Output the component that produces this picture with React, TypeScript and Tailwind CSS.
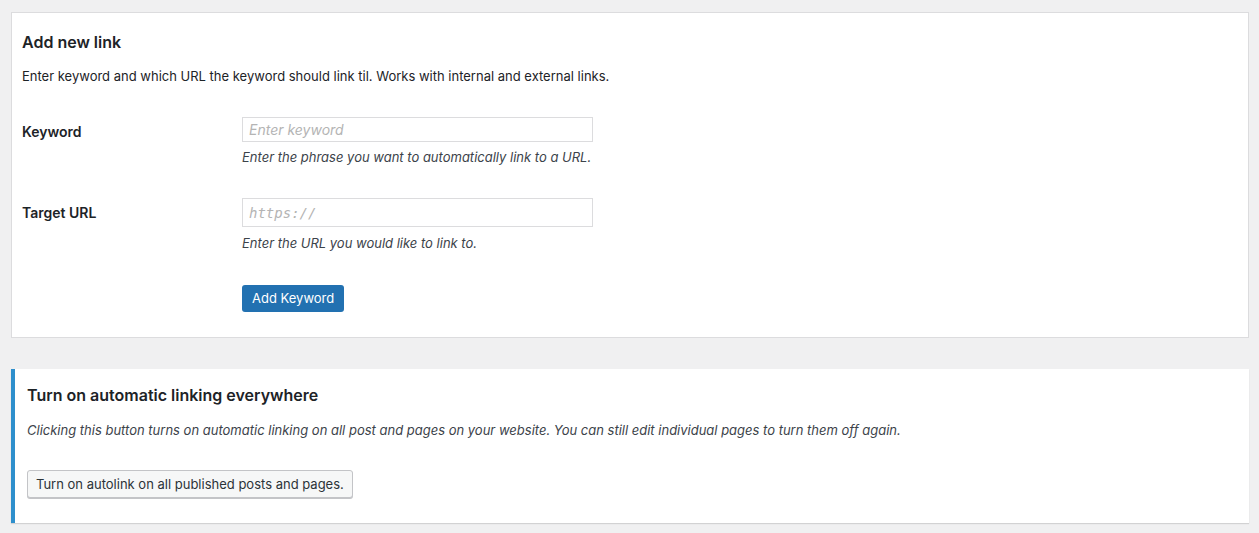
import React from "react";

const font = { fontFamily: "Inter, 'Noto Sans', sans-serif" };

// Rad i formulärtabellen
function FieldRow({
  label,
  placeholder,
  help,
  mono,
}: {
  label: string;
  placeholder: string;
  help: string;
  mono?: boolean;
}) {
  return (
    <div className="flex">
      <div className="w-[220px] shrink-0 pt-[4px] text-[14px] font-semibold text-[#1d2327]">
        {label}
      </div>
      <div>
        <input
          type="text"
          placeholder={placeholder}
          className={
            "block w-[351px] border border-[#dcdcde] bg-white px-[6px] text-[14px] text-[#2c3338] outline-none placeholder:text-[#b4b4b4] placeholder:italic " +
            (mono ? "h-[29px] font-['DejaVu_Sans_Mono',monospace] text-[13px]" : "h-[25px]")
          }
        />
        <p className={(mono ? "mt-[7px]" : "mt-[6px]") + " text-[13px] italic text-[#3c434a]"}>{help}</p>
      </div>
    </div>
  );
}

export default function App() {
  return (
    <div className="min-h-[533px] bg-[#f0f0f1] pl-[11px] pr-[10px] pt-[12px] pb-[10px]" style={font}>
      {/* Lägg till ny länk */}
      <div className="border border-[#dcdcde] bg-white px-[10px] pt-[17px] pb-[25px]">
        <h2 className="text-[16px] font-semibold text-[#1d2327]">Add new link</h2>
        <p className="mt-[13px] text-[13px] text-[#1d2327]">
          Enter keyword and which URL the keyword should link til. Works with internal and external links.
        </p>
        <div className="mt-[30px] flex flex-col gap-[31px]">
          <FieldRow
            label="Keyword"
            placeholder="Enter keyword"
            help="Enter the phrase you want to automatically link to a URL."
          />
          <FieldRow
            label="Target URL"
            placeholder="https://"
            help="Enter the URL you would like to link to."
            mono
          />
        </div>
        <div className="mt-[31px] pl-[220px]">
          <button className="h-[27px] rounded-[3px] bg-[#2271b1] px-[10px] text-[13px] text-white">
            Add Keyword
          </button>
        </div>
      </div>

      {/* Automatisk länkning */}
      <div className="mt-[31px] border-l-[4px] border-[#2e8fcc] bg-white pl-[12px] pt-[14px] pb-[25px] shadow-[0_1px_1px_rgba(0,0,0,0.12)]">
        <h2 className="text-[16px] font-semibold text-[#1d2327]">Turn on automatic linking everywhere</h2>
        <p className="mt-[14px] text-[13px] italic text-[#3c434a]">
          Clicking this button turns on automatic linking on all post and pages on your website. You can still edit
          individual pages to turn them off again.
        </p>
        <button className="mt-[30px] h-[28px] rounded-[3px] border border-[#c3c4c7] bg-[#f6f7f7] px-[8px] text-[13px] text-[#2c3338] shadow-[0_1px_0_#c3c4c7]">
          Turn on autolink on all published posts and pages.
        </button>
      </div>
    </div>
  );
}
